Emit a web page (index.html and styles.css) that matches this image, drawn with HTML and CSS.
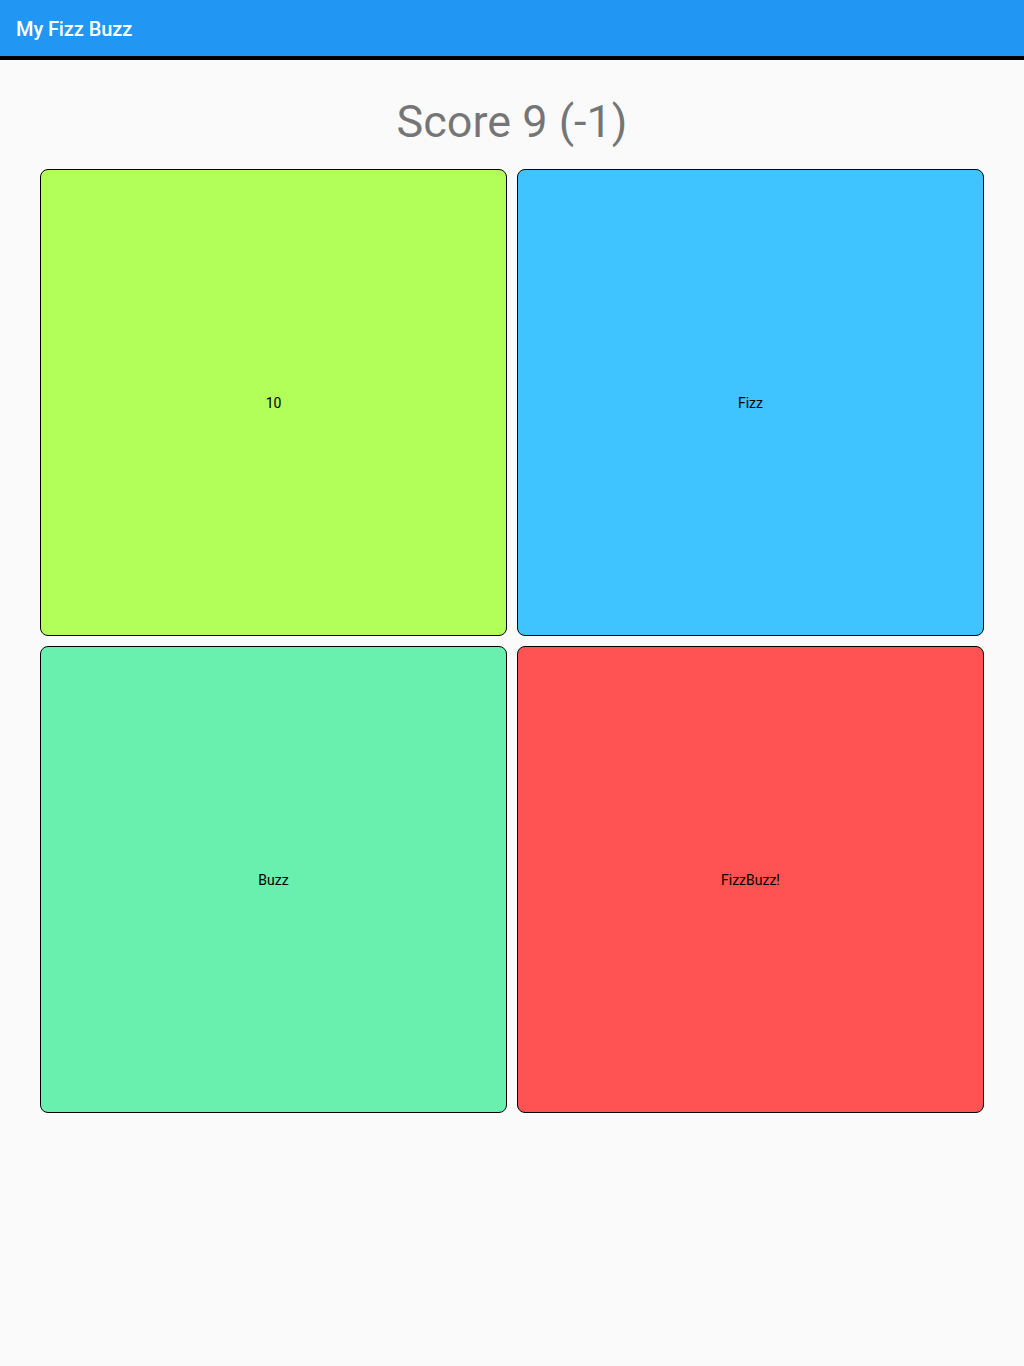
FILE: index.html
```html
<!DOCTYPE html>
<html>
<head>
<meta charset="utf-8">
<title>My Fizz Buzz</title>
<link rel="stylesheet" href="styles.css">
</head>
<body>
<header class="appbar"><h1 class="appbar-title">My Fizz Buzz</h1></header>
<main class="content">
  <div class="score">Score 9 (-1)</div>
  <div class="grid">
    <button class="tile tile-number">10</button>
    <button class="tile tile-fizz">Fizz</button>
    <button class="tile tile-buzz">Buzz</button>
    <button class="tile tile-fizzbuzz">FizzBuzz!</button>
  </div>
</main>
</body>
</html>
```
FILE: styles.css
```css
* { box-sizing: border-box; }
html, body { margin: 0; padding: 0; }
body {
  background: #fafafa;
  font-family: Roboto, "Noto Sans", sans-serif;
  width: 1024px;
  min-height: 1366px;
}
.appbar {
  height: 60px;
  background: #2196f3;
  border-bottom: 4px solid #000;
  display: flex;
  align-items: center;
  padding: 2px 16px 0;
}
.appbar-title {
  margin: 0;
  color: #fff;
  font-size: 20px;
  font-weight: 500;
  line-height: 24px;
  letter-spacing: -0.1px;
}
.content { padding: 0; }
.score {
  text-align: center;
  font-size: 45px;
  line-height: 53px;
  color: rgba(0, 0, 0, 0.54);
  padding: 35px 0 21px;
}
.grid {
  display: grid;
  grid-template-columns: 467px 467px;
  gap: 10px;
  padding: 0 40px;
}
.tile {
  height: 467px;
  border: 1px solid #000;
  border-radius: 8px;
  display: flex;
  align-items: center;
  justify-content: center;
  font-family: Roboto, "Noto Sans", sans-serif;
  font-size: 14px;
  color: #000;
  padding: 0;
  margin: 0;
}
.tile-number { background: #b2ff59; }
.tile-fizz { background: #40c4ff; }
.tile-buzz { background: #69f0ae; }
.tile-fizzbuzz { background: #ff5252; }
```
